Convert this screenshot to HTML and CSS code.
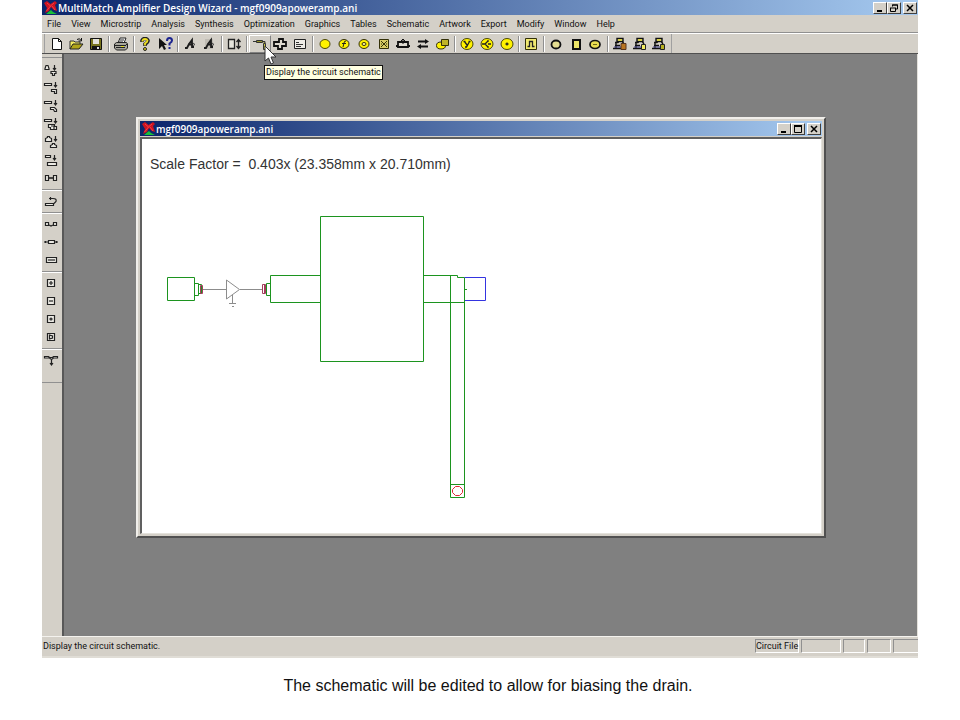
FILE: index.html
```html
<!DOCTYPE html>
<html lang="en">
<head>
<meta charset="utf-8">
<title>MultiMatch Amplifier Design Wizard</title>
<link rel="stylesheet" href="styles.css">
</head>
<body>
<svg class="defs" aria-hidden="true">
  <symbol id="logo" viewBox="0 0 13 13">
    <path d="M0 2l3-2 3.500 3L11 0l2 2-2 2 2 6-3-1-3-3-2 4-4 2 2-5z" fill="#cc1420"/>
    <path d="M3 2l3.500 3L10 2M6.500 5l-4 5M8 5l3 4" stroke="#f43c44" fill="none"/>
    <path d="M2 13l3-2.500 2-1.500 2 2 4 2z" fill="#18c038"/>
  </symbol>
  <symbol id="win-min" viewBox="0 0 10 8"><path d="M2 7h5" stroke="#000" stroke-width="2"/></symbol>
  <symbol id="win-max" viewBox="0 0 10 8"><path d="M1.500 1v6.500h7V1" fill="none" stroke="#000"/><path d="M1 1h8" stroke="#000" stroke-width="2"/></symbol>
  <symbol id="win-restore" viewBox="0 0 10 8"><path d="M3.500 2.500v-1.500h5v4h-2M1.500 4v3.500h5V4M3 1h6M1 4h6" fill="none" stroke="#000"/></symbol>
  <symbol id="win-close" viewBox="0 0 10 8"><path d="M2 1l6 6M8 1l-6 6" stroke="#000" stroke-width="1.500"/></symbol>
  <symbol id="export" viewBox="0 0 16 14">
    <path d="M5 1.500h6v3H5zM3 5.500h3l1-1M3 8.500h5M10 4l2 3M1 11.500h9M4 6v5" fill="none" stroke="#111" stroke-width="1.400"/>
    <path d="M6 3h4" stroke="#e8e020" stroke-width="1.500"/><path d="M2 10h7" stroke="#44448c"/>
  </symbol>
  <symbol id="letter" viewBox="0 0 16 14">
    <path d="M3 11h2l2-4 3-4v7h2M6 7.500h5" fill="none" stroke="#1c1c1c" stroke-width="1.800"/>
    <path d="M11 6l2 1.500-2 1" fill="none" stroke="#444"/>
  </symbol>
</svg>

<main class="app">
  <header class="titlebar">
    <svg class="logo" aria-hidden="true"><use href="#logo"/></svg>
    <h1 class="title">MultiMatch Amplifier Design Wizard - mgf0909apoweramp.ani</h1>
    <div class="controls">
      <button aria-label="Minimize"><svg><use href="#win-min"/></svg></button>
      <button aria-label="Restore"><svg><use href="#win-restore"/></svg></button>
      <button class="close" aria-label="Close"><svg><use href="#win-close"/></svg></button>
    </div>
  </header>

  <nav class="menubar" aria-label="Menu">
    <button>File</button><button>View</button><button>Microstrip</button><button>Analysis</button><button>Synthesis</button><button>Optimization</button><button>Graphics</button><button>Tables</button><button>Schematic</button><button>Artwork</button><button>Export</button><button>Modify</button><button>Window</button><button>Help</button>
  </nav>

  <div class="toolbar" role="toolbar" aria-label="Tools">
    <div class="strip">
      <button aria-label="New"><svg viewBox="0 0 16 14"><path d="M3.500 1.500h6l3 3v8h-9z" fill="#fff" stroke="#111"/><path d="M9.500 1.500v3h3" fill="none" stroke="#111"/></svg></button>
      <button aria-label="Open"><svg viewBox="0 0 16 14"><path d="M2 12V4h4l1 1h5v3" fill="#f4ec60" stroke="#333"/><path d="M2 12l3-5h10l-4 5z" fill="#b0a418" stroke="#222"/><path d="M9 2.500q3-2 4 1M13.500 1v3h-3" fill="none" stroke="#111"/></svg></button>
      <button aria-label="Save"><svg viewBox="0 0 16 14"><path d="M2.500 1.500h11v11h-11z" fill="#77731c" stroke="#111"/><path d="M5 2h6v5H5z" fill="#e4e2da"/><path d="M4 9h8v4H4z" fill="#111"/><path d="M9 10h2v2H9z" fill="#ddd"/></svg></button>
      <span class="sep"></span>
      <button aria-label="Print"><svg viewBox="0 0 16 14"><path d="M5 6l2-5h6l-2 5" fill="#fff" stroke="#222"/><path d="M7 3h4M6 5h4" stroke="#222"/><path d="M1.500 7l2-1.500h10l1 1.500v4l-2 2h-9l-2-2z" fill="#a8a69c" stroke="#222"/><path d="M2 8.500h10M3 10.500h9M12 9l2-2" stroke="#222"/><path d="M8 9.500h3" stroke="#e8e020"/></svg></button>
      <span class="sep"></span>
      <button aria-label="Help"><svg viewBox="0 0 16 14"><path d="M5 5V3.500q1-2 3-2t3 2q0 2-3 3.500V9" fill="none" stroke="#222" stroke-width="3.600"/><path d="M5.500 4.500V3.500Q6 2 8 2t2.500 1.500Q10.500 5 8 6.500V8.500" fill="none" stroke="#f0e020" stroke-width="1.800"/><circle cx="8" cy="12" r="1.500" fill="#e0d020" stroke="#222"/></svg></button>
      <button aria-label="Context help"><svg viewBox="0 0 16 14"><path d="M2 1v11l3-3 2 4 2-1-2-4h3z" fill="#111"/><path d="M10 4q0-3 2.500-3T15 3.500Q15 5 12.500 6.500V8.500M12.500 10v2" fill="none" stroke="#1c2490" stroke-width="2"/></svg></button>
      <span class="sep"></span>
      <button aria-label="Analyze"><svg viewBox="0 0 16 14"><use href="#letter"/></svg></button>
      <button aria-label="Analyze all"><svg viewBox="0 0 16 14"><path d="M4 2h8v10H4z" fill="#c0bcb4"/><use href="#letter"/></svg></button>
      <span class="sep"></span>
      <button aria-label="Height"><svg viewBox="0 0 16 14"><path d="M2.500 2.500h6v9h-6z" fill="#e6e4dc" stroke="#222" stroke-width="1.300"/><path d="M12.500 3v8M10.500 5l2-2.500 2 2.500M10.500 9l2 2.500 2-2.500" fill="none" stroke="#222" stroke-width="1.300"/></svg></button>
      <span class="sep"></span>
      <button class="hot" aria-label="Display the circuit schematic"><svg viewBox="0 0 16 14"><path d="M1 4.500h3M4.500 3.500h6v2h-6zM10 4.500h3v2" fill="#99952c" stroke="#333"/><path d="M11.500 6.500h2v6h-2z" fill="#c8c440" stroke="#333"/></svg></button>
      <button aria-label="Display the artwork"><svg viewBox="0 0 16 14"><path d="M7 2h4v3h3v4h-4v3H6V9H2V5h5z" fill="#dedad0" stroke="#111" stroke-width="1.800"/></svg></button>
      <button aria-label="Display the listing"><svg viewBox="0 0 16 14"><path d="M2.500 2.500h11v9h-11z" fill="#eeece6" stroke="#222"/><path d="M4 5.500h3M4 7.500h7M4 9.500h5" stroke="#333"/></svg></button>
      <span class="sep"></span>
      <button aria-label="Circle"><svg viewBox="0 0 16 14"><ellipse cx="8" cy="7" rx="5" ry="4.500" fill="#fff200" stroke="#4c4808"/></svg></button>
      <button aria-label="Frequency"><svg viewBox="0 0 16 14"><ellipse cx="8" cy="7" rx="5" ry="4.500" fill="#fff200" stroke="#333008"/><path d="M10 4q-2 0-2 2L7 10M6 6.500h4" fill="none" stroke="#222"/></svg></button>
      <button aria-label="Target"><svg viewBox="0 0 16 14"><ellipse cx="8" cy="7" rx="5" ry="4.500" fill="#fff200" stroke="#333008"/><ellipse cx="8" cy="7" rx="2" ry="1.500" fill="#fff8a0" stroke="#333008"/></svg></button>
      <button aria-label="Cross"><svg viewBox="0 0 16 14"><path d="M3.500 2.500h9v9h-9z" fill="#d8cc64" stroke="#333008"/><path d="M5 4l6 6M11 4l-6 6M5 7h1M10 7h1" stroke="#333008"/></svg></button>
      <button aria-label="Insert block"><svg viewBox="0 0 16 14"><path d="M3 5h10v5H3zM1 9h2M13 9h2" fill="#dedad0" stroke="#111" stroke-width="1.800"/><path d="M8 2v5M6 4l2-2 2 2" fill="none" stroke="#111"/></svg></button>
      <button aria-label="Swap"><svg viewBox="0 0 16 14"><path d="M3 4.500h8M5 9.500h8" stroke="#111" stroke-width="2"/><path d="M10 2l4 2.500-4 2.500zM6 7L2 9.500 6 12z" fill="#111"/></svg></button>
      <button aria-label="Shapes"><svg viewBox="0 0 16 14"><ellipse cx="6" cy="8.500" rx="4.500" ry="3.500" fill="#fff200" stroke="#333008"/><path d="M6.500 2.500h7v6h-7z" fill="#c0b428" stroke="#333008"/></svg></button>
      <span class="sep"></span>
      <button aria-label="Y parameters"><svg viewBox="0 0 16 14"><ellipse cx="8" cy="7" rx="6" ry="5.500" fill="#fff200" stroke="#4c4808"/><path d="M5.500 4.500L8 8M10.500 4.500L7.500 10H6M4.500 4.500h2M9.500 4.500h2" fill="none" stroke="#222" stroke-width="1.300"/></svg></button>
      <button aria-label="Couple"><svg viewBox="0 0 16 14"><ellipse cx="8" cy="7" rx="6" ry="5.500" fill="#fff200" stroke="#4c4808"/><path d="M3 7h3l3-3M6 7l3 3M9 3v2M9 9v2M9 7h3" fill="none" stroke="#222" stroke-width="1.300"/></svg></button>
      <button aria-label="Point"><svg viewBox="0 0 16 14"><ellipse cx="8" cy="7" rx="6" ry="5.500" fill="#fff200" stroke="#4c4808"/><path d="M6.500 7h3M8 5.500v3" stroke="#222" stroke-width="1.300"/></svg></button>
      <span class="sep"></span>
      <button aria-label="Pulse"><svg viewBox="0 0 16 14"><path d="M2.500 1.500h11v11h-11z" fill="#f2ea70" stroke="#333008"/><path d="M4.500 9.500h2v-5h3v5h2" fill="none" stroke="#222" stroke-width="1.300"/></svg></button>
      <span class="sep"></span>
      <button aria-label="Ring"><svg viewBox="0 0 16 14"><ellipse cx="8" cy="7.500" rx="4.500" ry="4" fill="#e4dc90" stroke="#111" stroke-width="1.800"/></svg></button>
      <button aria-label="Block"><svg viewBox="0 0 16 14"><path d="M5 3h7v9H5z" fill="#ece468" stroke="#111" stroke-width="2"/></svg></button>
      <button aria-label="Double ring"><svg viewBox="0 0 16 14"><ellipse cx="8" cy="7.500" rx="5" ry="4" fill="#e8dc50" stroke="#111" stroke-width="1.700"/><path d="M6 7.500h4" stroke="#6c6418"/></svg></button>
      <span class="sep"></span>
      <button aria-label="Export one"><svg viewBox="0 0 16 14"><use href="#export"/><path d="M9 6.500h5v6H9z" fill="#b87420" stroke="#58341c"/></svg></button>
      <button aria-label="Export two"><svg viewBox="0 0 16 14"><use href="#export"/><path d="M9.500 7.500h4v5h-4z" fill="#f4ec60" stroke="#222"/></svg></button>
      <button aria-label="Export three"><svg viewBox="0 0 16 14"><use href="#export"/><path d="M9.500 7.500h4v5h-4z" fill="#b8b020" stroke="#222"/></svg></button>
    </div>
  </div>

  <div class="body">
    <aside class="sidebar" role="toolbar" aria-label="Elements">
      <div class="rail">
        <button aria-label="Add stub"><svg viewBox="0 0 16 14"><path d="M3 2.500h2l1 3v1H2v-1zM8 8.500h5v2h-1.500v2h-2v-2H8z"/><path class="arrow" d="M11.500 2v5M10 5l1.500 2L13 5"/></svg></button>
        <button aria-label="Add bend"><svg viewBox="0 0 16 14"><path d="M1.500 2.500h7v2h-7zM8.500 8.500h5v4h-2v-2h-3z"/><path class="arrow" d="M12.500 1v5M11 4l1.500 2L14 4"/></svg></button>
        <button aria-label="Add mitre"><svg viewBox="0 0 16 14"><path d="M1.500 2.500h7v2h-7zM7.500 8.500h4l2 2v2h-2l-1-2h-3z"/><path class="arrow" d="M12.500 1v5M11 4l1.500 2L14 4"/></svg></button>
        <button aria-label="Add double bend"><svg viewBox="0 0 16 14"><path d="M1.500 2.500h7v2h-7zM5.500 7.500h6v2h2v3h-6v-2h-2zM8 9h3v3"/><path class="arrow" d="M12.500 1v5M11 4l1.500 2L14 4"/></svg></button>
        <button aria-label="Add taper"><svg viewBox="0 0 16 14"><path d="M2.500 6.500v-3l2-1v-1h2v1l2 1v3zM7.500 12.500v-2l2-1v-1h2v1l2 1v2z"/><path class="arrow" d="M12.500 1v5M11 4l1.500 2L14 4"/></svg></button>
        <button aria-label="Add step"><svg viewBox="0 0 16 14"><path d="M2.500 2.500h5v2h-5zM4.500 9.500h9v3h-9z"/><path class="arrow" d="M11.500 2v5M10 5l1.500 2L13 5"/></svg></button>
        <button aria-label="Add gap"><svg viewBox="0 0 16 14"><path d="M2.500 4.500h3v5h-3zM10.500 4.500h3v5h-3z"/><path d="M6 7h4M7 6v2M9 6v2"/></svg></button>
        <span class="rule"></span>
        <button aria-label="Undo"><svg viewBox="0 0 16 14"><path d="M2.500 9.500h8v2h-8z"/><path class="arrow" d="M6 4.500h4q4 0 3 3l-2 2M7.500 3v3"/></svg></button>
        <span class="rule"></span>
        <button aria-label="Series line"><svg viewBox="0 0 16 14"><path d="M2.500 5.500h3v3h-3zM10.500 5.500h3v3h-3z"/><path class="arrow" d="M6 8l2 1 2-1"/></svg></button>
        <button aria-label="Series element"><svg viewBox="0 0 16 14"><path d="M5.500 5.500h6v3h-6z"/><path d="M1 7h4M12 7h3M2.500 6v2M13.500 6v2"/></svg></button>
        <button aria-label="Line"><svg viewBox="0 0 16 14"><path d="M3.500 4.500h10v5h-10z"/><path d="M5 7h7"/></svg></button>
        <span class="rule"></span>
        <button aria-label="Zoom in"><svg viewBox="0 0 16 14"><path d="M4.500 3.500h7v7h-7z"/><path d="M6 7h4M8 5v4"/></svg></button>
        <button aria-label="Zoom out"><svg viewBox="0 0 16 14"><path d="M4.500 3.500h7v7h-7z"/><path d="M6 7h4"/></svg></button>
        <button aria-label="Zoom fit"><svg viewBox="0 0 16 14"><path d="M4.500 3.500h7v7h-7z"/><circle cx="8" cy="7" r="1"/></svg></button>
        <button aria-label="Zoom window"><svg viewBox="0 0 16 14"><path d="M4.500 3.500h7v7h-7z"/><path d="M6.500 5v4l3-1v-2z"/></svg></button>
        <span class="rule"></span>
        <button aria-label="Tee"><svg viewBox="0 0 16 14"><path d="M1.500 3.500h4l1 1h3l1-1h4v1.500h-4l-2 1.500-2-1.500h-5z"/><path class="arrow" d="M8.500 7v5M7 10l1.500 2L10 10"/></svg></button>
      </div>
    </aside>

    <section class="desktop">
      <div class="tooltip" role="tooltip">Display the circuit schematic</div>
      <svg class="cursor" viewBox="0 0 13 20" aria-hidden="true"><path d="M1 1v15l3.500-3 2.500 6 2.500-1-2.500-6h5z" fill="#fff" stroke="#333"/></svg>

      <article class="child">
        <header class="titlebar child-bar">
          <svg class="logo" aria-hidden="true"><use href="#logo"/></svg>
          <h2 class="title">mgf0909apoweramp.ani</h2>
          <div class="controls">
            <button aria-label="Minimize"><svg><use href="#win-min"/></svg></button>
            <button aria-label="Maximize"><svg><use href="#win-max"/></svg></button>
            <button class="close" aria-label="Close"><svg><use href="#win-close"/></svg></button>
          </div>
        </header>
        <div class="sheet">
          <p class="scale">Scale Factor =&nbsp; 0.403x (23.358mm x 20.710mm)</p>
          <svg class="schematic" viewBox="142 179 340 330" role="img" aria-label="Circuit schematic">
            <g fill="none" stroke="#1c941f">
              <path d="M167.500 277.500h27v23h-27zM194.500 283.500h4v12h-4zM198.500 284.500h3v9h-3z"/>
              <path d="M266.500 283.500h4v12h-4zM270.500 275.500h50v27h-50zM320.500 216.500h103v145h-103z"/>
              <path d="M423.500 275.500h34v2h7M423.500 302.500h41M450.500 275.500v222M464.500 277.500v220M450.500 484.500h14M450.500 497.500h14M465 289.500h2"/>
            </g>
            <g fill="none" stroke="#a43c5c">
              <path d="M200.500 285.500h2v8h-2zM262.500 284.500h3v9h-3z"/><path d="M264.500 285v8"/>
            </g>
            <path d="M203 289.500h24M240 289.500h22M226.500 280v19l13-9.500zM232.500 295v8M229 303.500h7M232 306.500h2" fill="none" stroke="#8c8c8c"/>
            <path d="M464.500 277.500h21v23h-21" fill="none" stroke="#3434e0"/>
            <path d="M464.500 278v23" stroke="#1c941f"/>
            <path d="M455.500 486.500h4l3 3v3l-3 3h-4l-3-3v-3z" fill="none" stroke="#e02838"/>
          </svg>
        </div>
      </article>
    </section>
  </div>

  <footer class="status">
    <span class="message">Display the circuit schematic.</span>
    <span class="cell file">Circuit File</span>
    <span class="cell wide"></span>
    <span class="cell small"></span>
    <span class="cell medium"></span>
    <span class="cell last"></span>
  </footer>
</main>
<p class="caption">The schematic will be edited to allow for biasing the drain.</p>
</body>
</html>
```
FILE: styles.css
```css
* { box-sizing: border-box; }

body {
  margin: 0;
  background: #fff;
  color: #111;
  font-family: Roboto, "Liberation Sans", sans-serif;
  font-size: 9px;
}

h1, h2, p { margin: 0; }

button {
  margin: 0;
  padding: 0;
  border: 0;
  background: none;
  color: inherit;
  font: inherit;
}

svg { display: block; flex: none; }
.defs { position: absolute; width: 0; height: 0; }

.app {
  margin: 0 42px;
  background: #d4d0c8;
}

.titlebar {
  display: flex;
  align-items: center;
  height: 15px;
  padding-left: 2px;
  gap: 1px;
  background: linear-gradient(90deg, #0a246a, #a6caf0);
  color: #fff;
}
.logo { width: 13px; height: 13px; }
.title {
  font-family: "Open Sans", sans-serif;
  font-size: 10px;
  line-height: 14px;
  font-weight: 600;
  white-space: nowrap;
}
.controls { display: flex; margin-left: auto; padding-right: 1px; }
.controls button {
  display: flex;
  align-items: center;
  justify-content: center;
  width: 14px;
  height: 12px;
  background: #d4d0c8;
  border: 1px solid;
  border-color: #fff #404040 #404040 #fff;
}
.controls .close { margin-left: 2px; }
.controls svg { width: 10px; height: 8px; }

.menubar {
  display: flex;
  align-items: center;
  gap: 10px;
  height: 18px;
  padding-left: 5px;
  border-bottom: 1px solid #909090;
}
.menubar button { line-height: 16px; }

.toolbar {
  height: 21px;
  padding-left: 2px;
  border-top: 1px solid #fff;
  border-bottom: 1px solid #505050;
}
.strip {
  display: flex;
  align-items: center;
  width: 628px;
  height: 19px;
  padding: 0 2px;
  border-left: 1px solid #a0a0a0;
  border-right: 1px solid #a0a0a0;
}
.strip button {
  display: flex;
  flex: 1 1 0;
  align-items: center;
  justify-content: center;
  height: 18px;
}
.strip svg { width: 16px; height: 14px; margin: 0 -2px; }
.strip .hot {
  border: 1px solid;
  border-color: #fff #808080 #808080 #fff;
}
.sep {
  flex: 0 0 5px;
  height: 16px;
  background: linear-gradient(90deg, transparent 2px, #909090 2px 3px, #fff 3px 4px, transparent 4px);
}

.body { display: flex; height: 582px; }
.sidebar {
  flex: none;
  width: 22px;
  padding-top: 3px;
  border-right: 2px solid #585858;
}
.rail {
  padding: 3px 0 13px;
  border-top: 1px solid #909090;
  border-bottom: 1px solid #909090;
}
.rail button {
  display: flex;
  align-items: center;
  justify-content: center;
  width: 18px;
  height: 18px;
}
.rail svg {
  width: 16px;
  height: 14px;
  fill: #eceae4;
  stroke: #222;
  stroke-width: 1.2;
}
.rail .arrow { fill: none; }
.rule {
  display: block;
  height: 5px;
  background: linear-gradient(transparent 2px, #909090 2px 3px, #fff 3px 4px, transparent 4px);
}

.desktop {
  position: relative;
  flex: 1;
  background: #808080;
  border-right: 1px solid #e4e2dc;
}
.tooltip {
  position: absolute;
  left: 200px;
  top: 11px;
  padding: 0 1px;
  border: 1px solid #111;
  background: #ffffe1;
  line-height: 13px;
  white-space: nowrap;
}
.cursor {
  position: absolute;
  left: 200px;
  top: -9px;
  width: 13px;
  height: 20px;
}

.child {
  position: absolute;
  left: 72px;
  top: 63px;
  width: 690px;
  height: 421px;
  display: flex;
  flex-direction: column;
  padding: 2px;
  background: #d4d0c8;
  border: 2px solid;
  border-color: #f0eeea #505050 #505050 #f0eeea;
}
.child-bar { flex: none; }
.sheet {
  flex: 1;
  margin-top: 1px;
  background: #fff;
  border: 1px solid;
  border-color: #606060 #e4e2dc #e4e2dc #606060;
  border-width: 2px 1px 1px 2px;
}
.scale {
  padding: 15px 0 0 8px;
  font-family: "Liberation Sans", sans-serif;
  font-size: 14px;
  line-height: 20px;
  color: #333;
}
.schematic {
  width: 340px;
  height: 330px;
  margin-top: 5px;
}
.schematic, .schematic * { overflow: visible; }

.status {
  display: flex;
  align-items: center;
  gap: 2px;
  height: 22px;
  padding: 2px 0 3px;
  border-top: 1px solid #f4f2ee;
  border-bottom: 2px solid #e0ddd6;
}
.message { flex: 1; padding-left: 1px; line-height: 14px; }
.cell {
  height: 14px;
  line-height: 12px;
  border: 1px solid;
  border-color: #909090 #fff #fff #909090;
  white-space: nowrap;
}
.file { width: 44px; text-align: center; }
.wide { width: 40px; }
.small { width: 22px; }
.medium { width: 24px; }
.last { width: 25px; border-right: 0; }

.caption {
  padding: 18px 0 0 16px;
  font-family: "Liberation Sans", sans-serif;
  font-size: 16px;
  line-height: 20px;
  text-align: center;
}
```
